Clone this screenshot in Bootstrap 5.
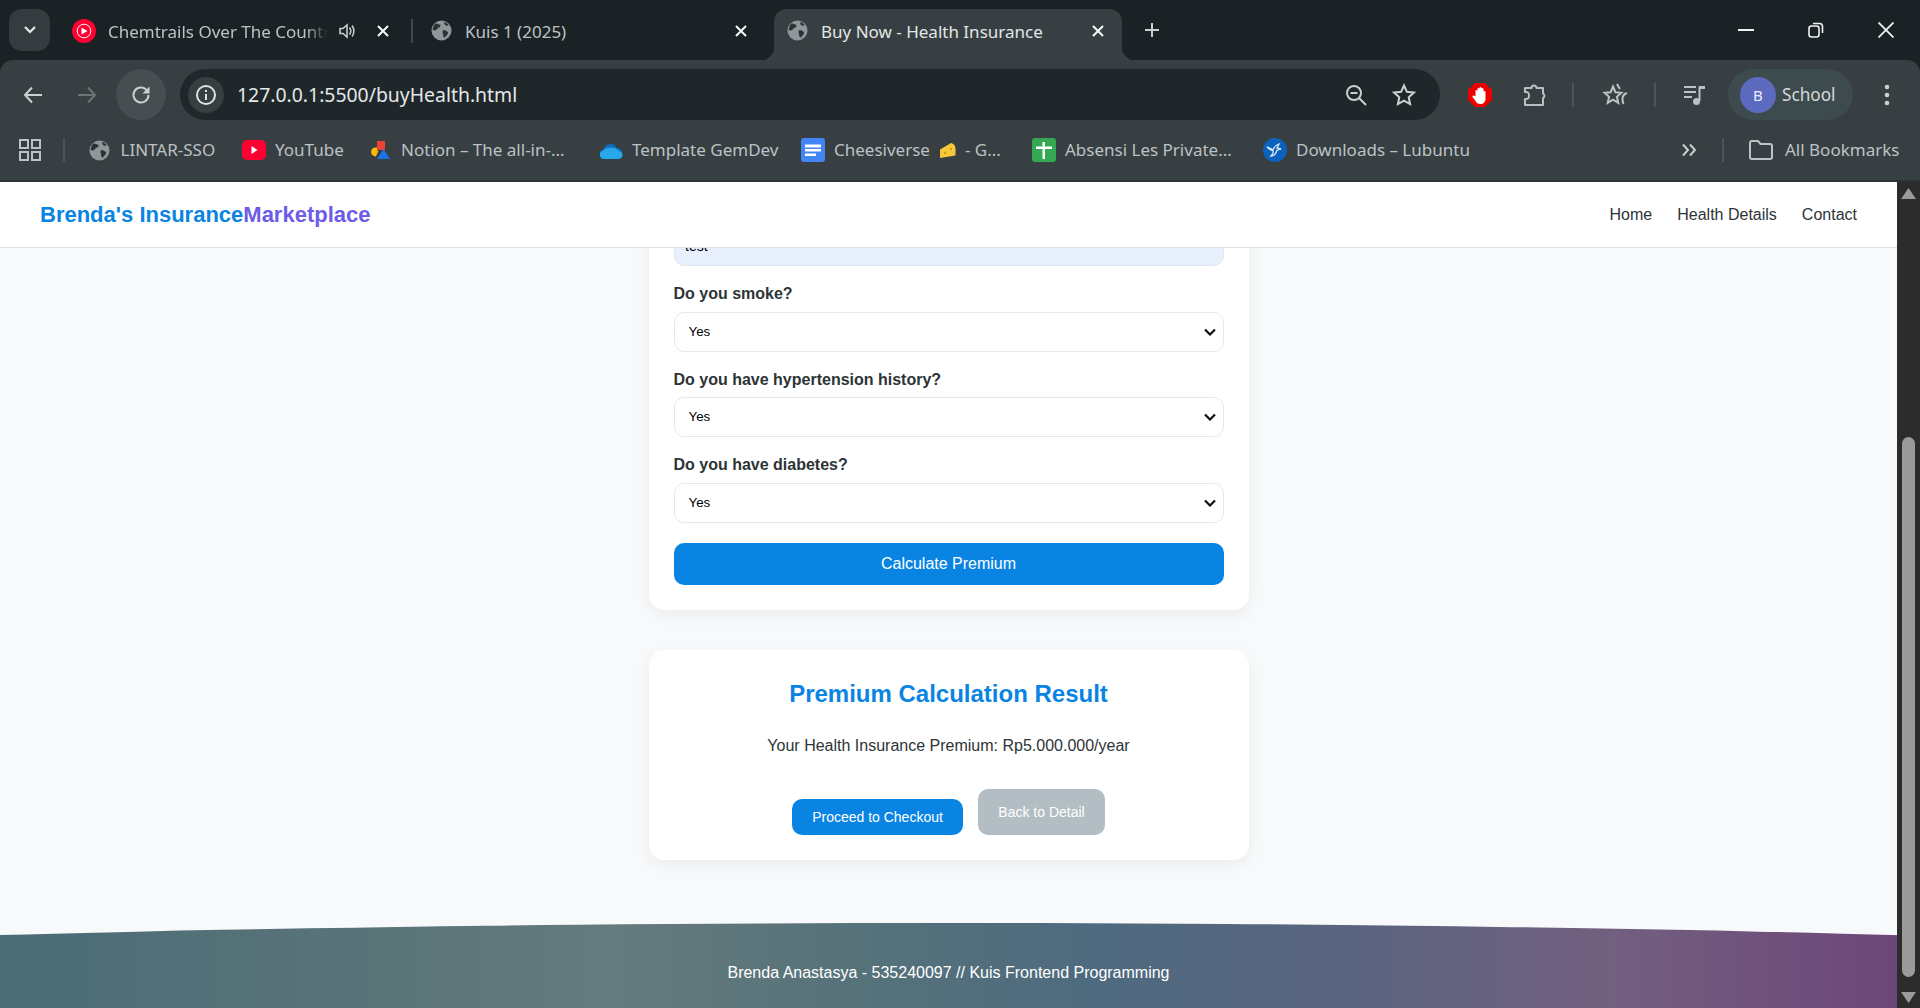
<!DOCTYPE html>
<html lang="en">
<head>
<meta charset="utf-8">
<title>Buy Now - Health Insurance</title>
<link href="https://cdn.jsdelivr.net/npm/bootstrap@5.3.0/dist/css/bootstrap.min.css" rel="stylesheet">
<style>
html,body{height:100%;overflow:hidden;}
body{font-family:"Liberation Sans",Arial,sans-serif;background:#1b2225;color:#2d3436;}
.shell{height:1008px;width:1920px;}
/* browser chrome */
.chr{font-family:"Noto Sans","Open Sans",sans-serif;font-size:17px;color:#bcc2c5;white-space:nowrap;line-height:20px;}
.chr svg{display:block;flex:none;}
.strip{height:60px;background:#1b2225;}
.tabmenu{width:41px;height:42px;margin:9px 0 0 9px;background:#353c3f;border-radius:13px;}
.tab{height:51px;margin-top:9px;}
.tab-a{width:341px;margin-left:22px;}
.tab-b{width:349px;}
.tab-c{width:348px;background:#373f42;border-radius:13px 13px 0 0;position:relative;color:#e3e6e8;margin-left:12px;}
.tab-c::before,.tab-c::after{content:"";position:absolute;bottom:0;width:13px;height:13px;}
.tab-c::before{left:-13px;background:radial-gradient(circle at 0 0,transparent 13px,#373f42 13.5px);}
.tab-c::after{right:-13px;background:radial-gradient(circle at 100% 0,transparent 13px,#373f42 13.5px);}
.ttl,.ttl-b,.ttl-c{padding-top:2px;}
.tab-a .ttl{width:220px;overflow:hidden;margin-left:12px;-webkit-mask-image:linear-gradient(90deg,#000 90%,transparent);mask-image:linear-gradient(90deg,#000 90%,transparent);}
.spk{margin-left:10px;}
.x-a{margin-left:19px;}
.tabsep{width:2px;height:24px;background:#42494c;margin-left:20px;}
.glb-b{margin-left:17.5px;}
.ttl-b{margin-left:13.5px;width:268px;}
.glb-c{margin-left:13px;}
.ttl-c{margin-left:13px;width:269px;}
.plus{margin-left:22px;}
.winbtns{margin-left:auto;padding-right:26px;gap:54px;}
.tools{height:60px;padding-top:9px;background:#373f42;border-radius:13px 13px 0 0;}
.nav-ic{margin-left:22px;}
.nav-fw{margin-left:32px;}
.reload{width:50px;height:51px;border-radius:50%;background:#464e51;margin-left:18px;}
.omni{width:1260px;height:51px;border-radius:26px;background:#1f272a;margin-left:14px;}
.infob{width:36px;height:36px;border-radius:50%;background:#373f42;margin-left:8px;}
.url{font-size:19.4px;color:#e4e7e9;margin-left:13px;line-height:24px;}
.oz{margin-left:auto;}
.os{margin-left:24px;margin-right:24px;}
.ab{margin-left:28px;}
.puz{margin-left:31px;}
.tsep{width:2px;height:24px;background:#4d5558;margin-left:25px;}
.st2{margin-left:28px;}
.ts2{margin-left:26px;}
.mus{margin-left:27px;}
.prof{width:125px;height:51px;border-radius:26px;background:#3d4b4e;margin-left:21px;padding-left:12px;}
.ava{width:36px;height:36px;border-radius:50%;background:#5c6bc0;color:#eef;font-size:15px;}
.prof-t{margin-left:6px;font-size:17.2px;color:#d5dadc;}
.dots{margin-left:31px;}
.bms{height:62px;background:#373f42;border-bottom:2px solid #2c3336;}
.bm-grid{margin-left:19px;}
.bsep{width:2px;height:24px;background:#4d5558;margin-left:22px;}
.bm{display:flex;align-items:center;gap:9px;color:inherit;text-decoration:none;}
.b1{margin-left:24px;width:153px;gap:10.5px;}
.b2{width:128px;}
.b3{width:229px;gap:11px;}
.b4{width:202px;}
.b5{width:231px;}
.b6{width:231px;}
.b-more{margin-left:auto;}
.b-sep{margin-left:25px;}
.b-fold{margin-left:25px;margin-right:12px;}
.allbm{width:135px;}
/* page */
.pagewrap{flex:1 1 auto;min-height:0;background:#f8f9fa;}
.pg{flex:1 1 auto;min-width:0;height:826px;}
.topnav{height:66px;background:#fff;border-bottom:1px solid #dcdfe0;padding:0 40px;z-index:2;}
.brandx{font-size:22px;font-weight:700;color:#0984e3;text-decoration:none;}
.brandx b{color:#6c5ce7;}
.navx{gap:25px;}
.navx a{color:#2d3436;text-decoration:none;font-size:16px;}
.scroller{flex:1 1 auto;min-height:0;overflow:hidden;padding-bottom:63px;gap:40px;}
.boxy{width:600px;flex:none;background:#fff;border-radius:15px;box-shadow:0 5px 15px rgba(0,0,0,.05);padding:25px;}
.fldlabel{font-weight:700;font-size:16px;color:#2d3436;padding-top:1px;margin-bottom:6px;display:block;line-height:24px;}
.fldlabel.lbl2{margin-bottom:5px;}
.fldctl{height:40px;font-size:13.33px;padding:0 14px;border:1.5px solid #e3e9eb;border-radius:10px;color:#000;box-shadow:none;margin-bottom:15px;}
.fldfill{background:#e8f0fe;padding-left:10.5px;font-size:14px;}
.fldsel{background-image:url("data:image/svg+xml,%3csvg xmlns='http://www.w3.org/2000/svg' viewBox='0 0 12 8'%3e%3cpath fill='none' stroke='%23111' stroke-width='2.2' d='M1 1.5l5 5 5-5'/%3e%3c/svg%3e");background-size:12px 8px;background-position:right 7px center;}
.calcbtn{height:42px;margin-top:5px;background:#0984e3;border:0;border-radius:10px;color:#fff;font-size:16px;width:100%;}
.restitle{color:#0984e3;font-size:24px;font-weight:700;line-height:36px;margin:1px 0 22px;}
.restext{font-size:16px;line-height:24px;margin:0 0 31px;color:#2d3436;}
.actrow{gap:15px;height:46px;}
.btn-go,.btn-back{font-size:14px;color:#fff;border-radius:10px;text-decoration:none;display:flex;align-items:center;justify-content:center;}
.btn-go{width:171px;height:36px;background:#0984e3;}
.btn-back{width:127px;height:46px;background:#b2bec3;}
.foot{height:85px;flex:none;color:#fff;font-size:16px;padding-top:38px;clip-path:ellipse(100% 90px at 50% 90px);background:linear-gradient(90deg,#4a6c76 0%,#5a7479 20%,#657b7d 32%,#56727a 45%,#4e6a7f 58%,#5b647f 72%,#735f7f 85%,#6c4679 100%);}
.sbar{width:23px;flex:none;background:#2c2c2c;padding:6px 0 5px;}
.sthumb{width:13px;height:540px;border-radius:7px;background:#9b9b9b;margin-top:238px;}
.sarrow-b{margin-top:auto;}
</style>
</head>
<body>
<svg width="0" height="0" class="d-none"><defs>
<symbol id="globe" viewBox="0 0 22 22"><circle cx="11" cy="11" r="10.5" fill="#8f979b"/><path d="M5 3.5c2 .6 3 1.500 4.500 1.300 1 .8.500 2-.5 2.700-1.200 1-2.800 1.200-3.300 2.700-.6 1-2 .8-4 .3.300-3 1.500-5.300 3.300-7zM13 10.500c2 .1 3.500 1 5 2.500-.5 2-2 4-4 5.500-1.500-1-1.200-2.500-1.500-4-.3-1.500-1-2.700.5-4zM14 2c2 .6 3.500 2 4.500 3.500-1.500.7-3 .5-4-.5-.6-.8-.8-2-.5-3z" fill="#2b3235"/></symbol>
<symbol id="xmark" viewBox="0 0 16 16"><path d="M3 3l10 10M13 3L3 13" stroke="currentColor" stroke-width="2" fill="none"/></symbol>
</defs></svg>
<div class="shell d-flex flex-column">
<!-- tab strip -->
<div class="chr strip d-flex">
  <div class="tabmenu d-flex align-items-center justify-content-center"><svg width="14" height="10" viewBox="0 0 14 10"><path d="M2 2l5 5 5-5" stroke="#e6e9ea" stroke-width="2.2" fill="none"/></svg></div>
  <div class="tab tab-a d-flex align-items-center pb-2">
    <svg width="24" height="24" viewBox="0 0 24 24"><circle cx="12" cy="12" r="12" fill="#ff0033"/><circle cx="12" cy="12" r="6.800" fill="none" stroke="#fff" stroke-width="1"/><path d="M9.500 8.500l6 3.500-6 3.500z" fill="#fff"/></svg>
    <span class="ttl">Chemtrails Over The Country Club</span>
    <svg class="spk" width="18" height="18" viewBox="0 0 18 18"><path d="M2 6.500h3l4-3.500v12l-4-3.500H2z" fill="none" stroke="#c9ced1" stroke-width="1.600"/><path d="M11.500 5.500c1.500 2 1.500 5 0 7M14 3.500c2.500 3 2.500 8 0 11" fill="none" stroke="#c9ced1" stroke-width="1.500"/></svg>
    <svg class="x-a text-light" width="16" height="16"><use href="#xmark"/></svg>
    <span class="tabsep"></span>
  </div>
  <div class="tab tab-b d-flex align-items-center pb-2">
    <svg class="glb-b" width="21" height="21"><use href="#globe"/></svg>
    <span class="ttl-b">Kuis 1 (2025)</span>
    <svg class="text-light" width="16" height="16"><use href="#xmark"/></svg>
  </div>
  <div class="tab tab-c d-flex align-items-center pb-2">
    <svg class="glb-c" width="21" height="21"><use href="#globe"/></svg>
    <span class="ttl-c">Buy Now - Health Insurance</span>
    <svg class="text-light" width="16" height="16"><use href="#xmark"/></svg>
  </div>
  <div class="d-flex align-items-center plus"><svg width="16" height="16" viewBox="0 0 16 16"><path d="M8 1v14M1 8h14" stroke="#c9ced1" stroke-width="2"/></svg></div>
  <div class="d-flex align-items-center winbtns">
    <svg width="16" height="16" viewBox="0 0 16 16"><path d="M0 8h16" stroke="#f1f2f3" stroke-width="2"/></svg>
    <svg width="16" height="16" viewBox="0 0 16 16"><rect x="1" y="4" width="10" height="11" rx="2.500" fill="none" stroke="#f1f2f3" stroke-width="1.600"/><path d="M5 1.500h6.500a3 3 0 0 1 3 3V11" fill="none" stroke="#f1f2f3" stroke-width="1.600"/></svg>
    <svg width="16" height="16" viewBox="0 0 16 16"><path d="M.5.500l15 15M15.500.500l-15 15" stroke="#f1f2f3" stroke-width="1.800"/></svg>
  </div>
</div>
<!-- toolbar -->
<div class="chr tools d-flex align-items-center">
  <svg class="nav-ic" width="22" height="22" viewBox="0 0 22 22"><path d="M20 11H3M10 3.500L3 11l7 7.500" stroke="#ccd1d3" stroke-width="2" fill="none"/></svg>
  <svg class="nav-fw" width="22" height="22" viewBox="0 0 22 22"><path d="M2 11h17M12 3.500l7 7.500-7 7.500" stroke="#6d7477" stroke-width="2" fill="none"/></svg>
  <div class="reload d-flex align-items-center justify-content-center"><svg width="22" height="22" viewBox="0 0 22 22"><path d="M18.500 11a7.500 7.500 0 1 1-2.300-5.400L18.500 8" fill="none" stroke="#ccd1d3" stroke-width="2"/><path d="M19.500 2.500v7h-7z" fill="#ccd1d3"/></svg></div>
  <div class="omni d-flex align-items-center">
    <div class="infob d-flex align-items-center justify-content-center"><svg width="22" height="22" viewBox="0 0 22 22"><circle cx="11" cy="11" r="9" fill="none" stroke="#dfe2e4" stroke-width="2"/><path d="M11 10v6M11 6v2" stroke="#dfe2e4" stroke-width="2"/></svg></div>
    <span class="url">127.0.0.1:5500/buyHealth.html</span>
    <svg class="oz" width="24" height="24" viewBox="0 0 24 24"><circle cx="10" cy="10" r="7" fill="none" stroke="#c9ced1" stroke-width="2"/><path d="M6.500 10h7M15 15l7 7" stroke="#c9ced1" stroke-width="2"/></svg>
    <svg class="os" width="24" height="24" viewBox="0 0 24 24"><path d="M12 2.500l2.900 6.300 6.900.8-5.100 4.700 1.400 6.800-6.100-3.400-6.100 3.400 1.400-6.800L2.200 9.600l6.900-.8z" fill="none" stroke="#ccd1d3" stroke-width="2"/></svg>
  </div>
  <svg class="ab" width="24" height="24" viewBox="0 0 24 24"><path d="M7 0h10l7 7v10l-7 7H7l-7-7V7z" fill="#e00"/><path d="M7.500 13V8a1 1 0 0 1 2 0V6a1 1 0 0 1 2 0V5a1 1 0 0 1 2 0v1a1 1 0 0 1 2 0v3a1 1 0 0 1 2 0v6c0 4-2 6-5 6s-4-1-5-3l-3-4c-.5-1 1-2 2-1z" fill="#fff"/></svg>
  <svg class="puz" width="24" height="24" viewBox="0 0 24 24"><path d="M2 5h6.500a2.500 2.500 0 0 1 5 0H20v5.500a2.500 2.500 0 0 1 0 4.500V22H2v-6c3 .5 4-1 4-3.500S5 8.500 2 9z" fill="none" stroke="#b9bfc2" stroke-width="2" stroke-linejoin="round"/></svg>
  <span class="tsep"></span>
  <svg class="st2" width="26" height="26" viewBox="0 0 26 26"><path d="M11 4.500l2.400 5.700 6 .6-4.500 4 1.400 6-5.300-3.200-5.300 3.200 1.400-6-4.500-4 6-.6z" fill="none" stroke="#bcc2c5" stroke-width="2"/><path d="M15 2c1 2 2 3.500 3 5M25 11c-3 1-4.500 3-4.500 6 0 2 .3 3.500 1 5" fill="none" stroke="#bcc2c5" stroke-width="2"/></svg>
  <span class="tsep ts2"></span>
  <svg class="mus" width="24" height="24" viewBox="0 0 24 24"><path d="M1 4h12M1 9h12M1 14h8" stroke="#bcc2c5" stroke-width="2"/><path d="M16.500 4v14" stroke="#bcc2c5" stroke-width="2"/><path d="M16 3h6v3h-6z" fill="#bcc2c5"/><circle cx="13.500" cy="18.500" r="3.500" fill="#bcc2c5"/></svg>
  <div class="prof d-flex align-items-center"><span class="ava d-flex align-items-center justify-content-center">B</span><span class="prof-t">School</span></div>
  <svg class="dots" width="6" height="24" viewBox="0 0 6 24"><circle cx="3" cy="4" r="2.300" fill="#c9ced1"/><circle cx="3" cy="12" r="2.300" fill="#c9ced1"/><circle cx="3" cy="20" r="2.300" fill="#c9ced1"/></svg>
</div>
<!-- bookmarks -->
<div class="chr bms d-flex align-items-center">
  <svg class="bm-grid" width="22" height="22" viewBox="0 0 22 22"><g fill="none" stroke="#bcc2c5" stroke-width="2"><rect x="1" y="1" width="8" height="8"/><rect x="13" y="1" width="8" height="8"/><rect x="1" y="13" width="8" height="8"/><rect x="13" y="13" width="8" height="8"/></g></svg>
  <span class="bsep"></span>
  <a class="bm b1" href="#"><svg width="21" height="21"><use href="#globe"/></svg><span>LINTAR-SSO</span></a>
  <a class="bm b2" href="#"><svg width="24" height="20" viewBox="0 0 24 20"><rect width="24" height="20" rx="5" fill="#ff0033"/><path d="M9.500 6l6 4-6 4z" fill="#fff"/></svg><span>YouTube</span></a>
  <a class="bm b3" href="#"><svg width="20" height="20" viewBox="0 0 20 20"><path d="M7 1h8v9H7z" fill="#ea4335"/><path d="M1 12a4.500 4.500 0 0 1 4.500-4.500c.5 0 1 .1 1.500.3V10l1.400 1-2.400 5.400A4.500 4.500 0 0 1 1 12z" fill="#fbb80c"/><path d="M13.500 9L20 19H7z" fill="#1a73e8"/></svg><span>Notion – The all-in-...</span></a>
  <a class="bm b4" href="#"><svg width="24" height="17" viewBox="0 0 24 17"><path d="M4.500 15.500A4 4 0 0 1 5 7.500 6.500 6.500 0 0 1 17.500 6 5 5 0 0 1 23 12" fill="#0f6cbd"/><path d="M5 17a4 4 0 0 1-1-7.900c1-2.500 3.500-3.500 6-3 1.500-.8 3-1 5 0 2 .4 4 1 4.500 3a4 4 0 0 1 3.500 6c-.7 1.200-2 1.900-3.500 1.900z" fill="#28a8ea"/></svg><span>Template GemDev</span></a>
  <a class="bm b5" href="#"><svg width="24" height="24" viewBox="0 0 24 24"><rect width="24" height="24" rx="3" fill="#4285f4"/><path d="M4 6.500h16v3H4zM4 11h16v2.500H4zM4 15.500h11v2.500H4z" fill="#fff"/></svg><span>Cheesiverse</span><svg width="17" height="17" viewBox="0 0 17 17"><path d="M1 7.500L12 1c2.500.5 4.500 2.500 4.500 5.500v7L1 16z" fill="#f6c83a"/><circle cx="6" cy="11" r="1.200" fill="#d99e14"/><circle cx="12" cy="7" r="1.200" fill="#d99e14"/></svg><span>- G...</span></a>
  <a class="bm b6" href="#"><svg width="24" height="24" viewBox="0 0 24 24"><rect width="24" height="24" rx="3" fill="#34a853"/><path d="M4 8.500h16v2.500H4zM10.500 4H13v17h-2.500z" fill="#fff"/></svg><span>Absensi Les Private...</span></a>
  <a class="bm" href="#"><svg width="24" height="24" viewBox="0 0 24 24"><circle cx="12" cy="12" r="12" fill="#0b62bd"/><path d="M4 9c3 1 5 2 6 3 1-3 3-5 6-6l-2 4 4 1-4 1c-1 4-3 6-6 6 2-2 3-3 2-5-2-1-4-2-6-4z" fill="none" stroke="#dbe9f7" stroke-width="1.300"/></svg><span>Downloads – Lubuntu</span></a>
  <svg class="b-more" width="16" height="14" viewBox="0 0 16 14"><path d="M2 1.500L7 7l-5 5.500M9 1.500L14 7l-5 5.500" fill="none" stroke="#c9ced1" stroke-width="2"/></svg>
  <span class="bsep b-sep"></span>
  <svg class="b-fold" width="24" height="20" viewBox="0 0 24 20"><path d="M1 3a2 2 0 0 1 2-2h6l2.500 3H21a2 2 0 0 1 2 2v11a2 2 0 0 1-2 2H3a2 2 0 0 1-2-2z" fill="none" stroke="#bcc2c5" stroke-width="2"/></svg>
  <span class="allbm">All Bookmarks</span>
</div>
<!-- page -->
<div class="pagewrap d-flex">
  <div class="pg d-flex flex-column">
    <nav class="topnav d-flex flex-shrink-0 align-items-center justify-content-between">
      <a class="brandx" href="#">Brenda's Insurance<b>Marketplace</b></a>
      <div class="navx d-flex"><a href="#">Home</a><a href="#">Health Details</a><a href="#">Contact</a></div>
    </nav>
    <main class="scroller d-flex flex-column align-items-center justify-content-end">
      <form class="boxy">
        <input class="form-control fldctl fldfill" value="test" aria-label="Notes">
        <label class="fldlabel">Do you smoke?</label>
        <select class="form-select fldctl fldsel" aria-label="Do you smoke?"><option>Yes</option><option>No</option></select>
        <label class="fldlabel lbl2">Do you have hypertension history?</label>
        <select class="form-select fldctl fldsel" aria-label="Hypertension"><option>Yes</option><option>No</option></select>
        <label class="fldlabel">Do you have diabetes?</label>
        <select class="form-select fldctl fldsel" aria-label="Diabetes"><option>Yes</option><option>No</option></select>
        <button type="button" class="btn calcbtn">Calculate Premium</button>
      </form>
      <section class="boxy text-center">
        <h2 class="restitle">Premium Calculation Result</h2>
        <p class="restext">Your Health Insurance Premium: Rp5.000.000/year</p>
        <div class="actrow d-flex justify-content-center align-items-end">
          <a class="btn-go" href="#">Proceed to Checkout</a>
          <a class="btn-back" href="#">Back to Detail</a>
        </div>
      </section>
    </main>
    <footer class="foot text-center">Brenda Anastasya - 535240097 // Kuis Frontend Programming</footer>
  </div>
  <div class="sbar d-flex flex-column align-items-center">
    <svg width="15" height="11" viewBox="0 0 15 11"><path d="M7.500 0L15 11H0z" fill="#9b9b9b"/></svg>
    <div class="sthumb"></div>
    <svg class="sarrow-b" width="15" height="11" viewBox="0 0 15 11"><path d="M7.500 11L15 0H0z" fill="#9b9b9b"/></svg>
  </div>
</div>
</div>
</body>
</html>
